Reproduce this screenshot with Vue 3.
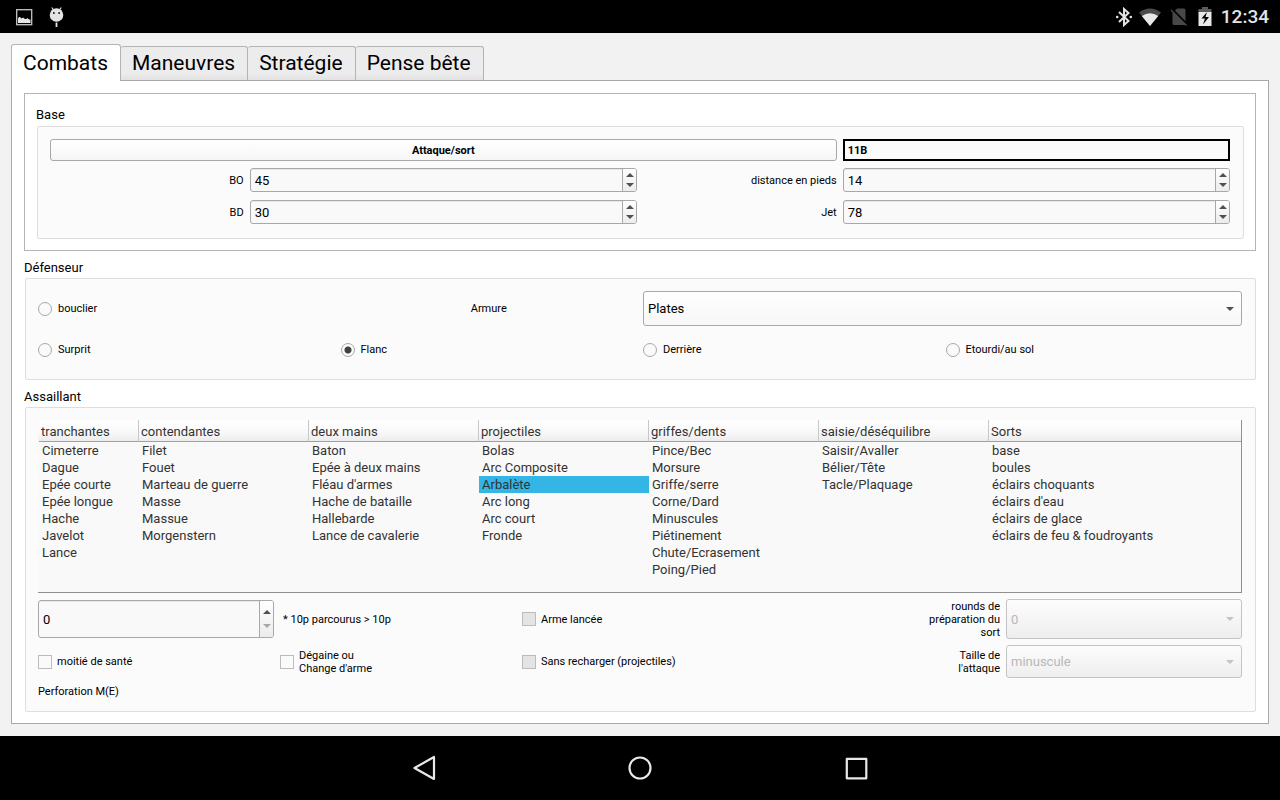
<script setup>
import { ref } from 'vue'

const tabs = ['Combats', 'Maneuvres', 'Stratégie', 'Pense bête']
const activeTab = ref('Combats')

const attack = ref('11B')
const stats = ref([
  { id: 'bo', label: 'BO', value: 45 },
  { id: 'distance', label: 'distance en pieds', value: 14 },
  { id: 'bd', label: 'BD', value: 30 },
  { id: 'jet', label: 'Jet', value: 78 },
])

const armour = ref('Plates')
const positions = ['Surprit', 'Flanc', 'Derrière', 'Etourdi/au sol']
const position = ref('Flanc')
const shield = ref(false)

const weapons = [
  { name: 'tranchantes', items: ['Cimeterre', 'Dague', 'Epée courte', 'Epée longue', 'Hache', 'Javelot', 'Lance'] },
  { name: 'contendantes', items: ['Filet', 'Fouet', 'Marteau de guerre', 'Masse', 'Massue', 'Morgenstern'] },
  { name: 'deux mains', items: ['Baton', 'Epée à deux mains', "Fléau d'armes", 'Hache de bataille', 'Hallebarde', 'Lance de cavalerie'] },
  { name: 'projectiles', items: ['Bolas', 'Arc Composite', 'Arbalète', 'Arc long', 'Arc court', 'Fronde'] },
  { name: 'griffes/dents', items: ['Pince/Bec', 'Morsure', 'Griffe/serre', 'Corne/Dard', 'Minuscules', 'Piétinement', 'Chute/Ecrasement', 'Poing/Pied'] },
  { name: 'saisie/déséquilibre', items: ['Saisir/Avaller', 'Bélier/Tête', 'Tacle/Plaquage'] },
  { name: 'Sorts', items: ['base', 'boules', 'éclairs choquants', "éclairs d'eau", 'éclairs de glace', 'éclairs de feu & foudroyants'] },
]
const rowCount = Math.max(...weapons.map((w) => w.items.length))
const selected = ref('Arbalète')
const travelled = ref(0)

function select(item) {
  if (item) selected.value = item
}
</script>

<template>
  <div class="screen">
    <header class="status">
      <div class="status-left">
        <svg width="18" height="18" viewBox="0 0 18 18">
          <rect x="1.700" y="1.700" width="15" height="15" fill="#000" stroke="#c4c4c4" stroke-width="1.300" />
          <path d="M3 15v-4.500l1-1.500h1l1.500 1.500 1.500-1 2 1.500h1.500l1-1 1.500 1.500h1.500V15z" fill="#e4e4e4" />
        </svg>
        <svg width="18" height="22" viewBox="0 0 18 22">
          <path d="M3.800 1.500l2 3M13.200 1.500l-2 3" stroke="#e4e4e4" stroke-width="1.200" />
          <circle cx="8.500" cy="9" r="6.800" fill="#e4e4e4" />
          <path d="M5 7h1.700M10.300 7h1.700" stroke="#000" stroke-width="1.500" />
          <path d="M8.500 16.500v4.500" stroke="#e4e4e4" stroke-width="1.800" />
        </svg>
      </div>
      <div class="status-right">
        <svg width="18" height="20" viewBox="0 0 18 20">
          <path d="M4 5l9.500 9L9 18V2l4.500 4L4 15" fill="none" stroke="#e4e4e4" stroke-width="2" />
          <circle cx="2.200" cy="10" r="1.300" fill="#e4e4e4" />
          <circle cx="15.800" cy="10" r="1.300" fill="#e4e4e4" />
        </svg>
        <svg width="24" height="20" viewBox="0 0 24 20">
          <path d="M1 5.500Q12-2.500 23 5.500L12 19z" fill="#4c4c4c" />
          <path d="M3.800 8.900Q12 3.500 20.200 8.900L12 19z" fill="#e8e8e8" />
        </svg>
        <svg width="18" height="20" viewBox="0 0 18 20">
          <path d="M6 1.500h7q1.500 0 1.500 1.500v15H3Q1.500 18 1.500 16.500V6.500z" fill="#484848" />
          <path d="M.5 1.800l16 16" stroke="#000" stroke-width="2.500" />
          <path d="M-.5 2.500l16 16" stroke="#484848" stroke-width="1.400" />
        </svg>
        <svg width="14" height="20" viewBox="0 0 14 20">
          <path d="M4 0h6v2h3.500v4H.5V2H4z" fill="#5c5c5c" />
          <path d="M.5 5h13v14H.5z" fill="#e8e8e8" />
          <path d="M9 5L3.500 11.500H7L5 17.500 11 10H7.500z" fill="#000" />
        </svg>
        <time class="clock">12:34</time>
      </div>
    </header>

    <main class="window">
      <div class="tabs" role="tablist">
        <button
          v-for="tab in tabs"
          :key="tab"
          type="button"
          role="tab"
          class="tab"
          :class="{ active: tab === activeTab }"
          :aria-selected="tab === activeTab"
          @click="activeTab = tab"
        >{{ tab }}</button>
      </div>

      <div class="pane">
        <section class="frame">
          <h2 class="title">Base</h2>
          <div class="group base">
            <button type="button" class="attack">Attaque/sort</button>
            <input v-model="attack" class="code" type="text" aria-label="Attaque/sort" />
            <template v-for="stat in stats" :key="stat.id">
              <label class="small right" :for="stat.id">{{ stat.label }}</label>
              <div class="spin">
                <input :id="stat.id" v-model.number="stat.value" type="number" />
                <div class="steps">
                  <button type="button" class="step up" aria-label="+" @click="stat.value++"></button>
                  <button type="button" class="step down" aria-label="-" @click="stat.value--"></button>
                </div>
              </div>
            </template>
          </div>
        </section>

        <section>
          <h2 class="title">Défenseur</h2>
          <div class="group defender">
            <label class="choice small"><input v-model="shield" type="radio" name="shield" :value="true" />bouclier</label>
            <label class="small center" for="armour">Armure</label>
            <div class="combo wide">
              <select id="armour" v-model="armour"><option>Plates</option></select>
            </div>
            <label v-for="p in positions" :key="p" class="choice small">
              <input v-model="position" type="radio" name="position" :value="p" />{{ p }}
            </label>
          </div>
        </section>

        <section>
          <h2 class="title">Assaillant</h2>
          <div class="group">
            <div class="weapons">
              <table>
                <colgroup>
                  <col class="first" />
                  <col v-for="n in 5" :key="n" class="middle" />
                  <col />
                </colgroup>
                <thead>
                  <tr><th v-for="w in weapons" :key="w.name" scope="col">{{ w.name }}</th></tr>
                </thead>
                <tbody>
                  <tr v-for="r in rowCount" :key="r">
                    <td
                      v-for="w in weapons"
                      :key="w.name"
                      :class="{ selected: w.items[r - 1] === selected }"
                      @click="select(w.items[r - 1])"
                    >{{ w.items[r - 1] }}</td>
                  </tr>
                </tbody>
              </table>
            </div>

            <div class="options">
              <div class="spin tall">
                <input id="travelled" v-model.number="travelled" type="number" min="0" />
                <div class="steps">
                  <button type="button" class="step up" aria-label="+" @click="travelled++"></button>
                  <button type="button" class="step down" aria-label="-" :disabled="travelled === 0" @click="travelled--"></button>
                </div>
              </div>
              <label class="small note" for="travelled">* 10p parcourus &gt; 10p</label>
              <label class="check small"><input type="checkbox" disabled />Arme lancée</label>
              <label class="small right narrow" for="rounds">rounds de préparation du sort</label>
              <div class="combo high">
                <select id="rounds" disabled><option>0</option></select>
              </div>

              <label class="check small"><input type="checkbox" />moitié de santé</label>
              <label class="check small"><input type="checkbox" /><span>Dégaine ou<br />Change d'arme</span></label>
              <label class="check small"><input type="checkbox" disabled />Sans recharger (projectiles)</label>
              <label class="small right narrow" for="size">Taille de l'attaque</label>
              <div class="combo">
                <select id="size" disabled><option>minuscule</option></select>
              </div>

              <p class="small result">Perforation M(E)</p>
            </div>
          </div>
        </section>
      </div>
    </main>

    <nav class="navbar">
      <button type="button" aria-label="Retour">
        <svg width="32" height="32" viewBox="0 0 32 32"><path d="M6.500 16L26 5v22z" fill="none" stroke="#e8e8e8" stroke-width="2.200" stroke-linejoin="round" /></svg>
      </button>
      <button type="button" aria-label="Accueil">
        <svg width="32" height="32" viewBox="0 0 32 32"><circle cx="16" cy="16" r="10.500" fill="none" stroke="#e8e8e8" stroke-width="2.200" /></svg>
      </button>
      <button type="button" aria-label="Récents">
        <svg width="32" height="32" viewBox="0 0 32 32"><rect x="6.800" y="6.800" width="19.500" height="19.500" fill="none" stroke="#e8e8e8" stroke-width="2.200" stroke-linejoin="round" /></svg>
      </button>
    </nav>
  </div>
</template>

<style>
body {
  margin: 0;
  background: #f2f2f2;
}
</style>

<style scoped>
* {
  box-sizing: border-box;
}
.screen {
  min-height: 100vh;
  display: flex;
  flex-direction: column;
  font-family: Roboto, "Liberation Sans", sans-serif;
  font-size: 13px;
  color: #000;
}
button,
input,
select {
  font: inherit;
  color: inherit;
  margin: 0;
  padding: 0;
  border: 0;
  border-radius: 0;
  background: none;
  outline: none;
}
svg {
  display: block;
}

.status {
  height: 33px;
  padding: 0 11px 0 15px;
  display: flex;
  align-items: center;
  justify-content: space-between;
  background: #000;
}
.status-left {
  display: flex;
  align-items: center;
  gap: 15px;
}
.status-right {
  display: flex;
  align-items: center;
  gap: 9px;
}
.status-right svg:first-child {
  margin-right: -4px;
}
.clock {
  font-size: 19px;
  font-weight: 500;
  line-height: 24px;
  color: #e4e4e4;
}

.window {
  flex: 1;
  display: flex;
  flex-direction: column;
  padding: 11px 11px 12px;
  background: #f2f2f2;
}
.tabs {
  display: flex;
  align-items: flex-end;
  padding-right: 11px;
}
.tab {
  height: 34px;
  padding: 0 12px 0 11px;
  border: 1px solid #b4b4b4;
  border-width: 1px 1px 0 0;
  border-radius: 3px 3px 0 0;
  font-size: 21px;
  line-height: 33px;
  background: linear-gradient(#ececec 80%, #e2e2e2);
}
.tab.active {
  position: relative;
  height: 37px;
  margin-bottom: -1px;
  border-width: 1px 1px 0;
  line-height: 36px;
  background: #fff;
}
.pane {
  flex: 1;
  padding: 12px 12px 11px;
  border: 1px solid #a8a8a8;
  background: #fff;
}

.title {
  margin: 0;
  padding: 9px 0 2px;
  font-size: 13px;
  font-weight: 400;
  line-height: 16px;
}
.frame {
  padding: 4px 11px 11px;
  border: 1px solid #b4b4b4;
}
.frame .title {
  padding-bottom: 3px;
}
.group {
  margin-left: 1px;
  padding: 12px 13px 12px 12px;
  border: 1px solid #dedede;
  border-radius: 2px;
  background: #fbfbfb;
}
.small {
  margin: 0;
  font-size: 11px;
  line-height: 13px;
}
.right {
  text-align: right;
}
.center {
  text-align: center;
}

.base {
  display: grid;
  grid-template-columns: 1fr 2fr 1fr 2fr;
  grid-template-rows: 22px 25px 25px;
  align-items: center;
  column-gap: 6px;
  row-gap: 7px;
  padding-bottom: 13px;
}
.base .spin {
  align-self: start;
}
.attack {
  grid-column: 1 / 4;
  height: 22px;
  border: 1px solid #a8a8a8;
  border-radius: 3px;
  font-size: 11px;
  font-weight: 700;
  background: linear-gradient(#fff, #f6f6f6);
}
.code {
  height: 22px;
  width: 100%;
  min-width: 0;
  padding: 0 3px;
  border: 2px solid #000;
  font-size: 11px;
  font-weight: 700;
}

.spin {
  display: flex;
  height: 24px;
  border: 1px solid #a8a8a8;
  border-radius: 3px;
  overflow: hidden;
  background: #f9f9f9;
  box-shadow: inset 0 1px 0 #e8e8e8;
}
.spin.tall {
  height: 38px;
}
.spin input {
  flex: 1;
  min-width: 0;
  padding: 0 4px;
  appearance: textfield;
}
.spin input::-webkit-inner-spin-button {
  appearance: none;
}
.steps {
  width: 14px;
  display: flex;
  flex-direction: column;
  align-items: center;
  justify-content: space-evenly;
  border-left: 1px solid #a8a8a8;
  background: linear-gradient(#fff, #ececec);
}
.step {
  width: 12px;
  height: 8px;
  display: grid;
  place-items: center;
}
.step::before {
  content: "";
  border: 4px solid transparent;
}
.up::before {
  border-top-width: 0;
  border-bottom-color: #505050;
}
.down::before {
  border-bottom-width: 0;
  border-top-color: #505050;
}
.down:disabled::before {
  border-top-color: #a8a8a8;
}

.defender {
  display: grid;
  grid-template-columns: repeat(4, 1fr);
  grid-auto-rows: 35px;
  align-items: center;
  gap: 6px;
}
.wide {
  grid-column: 3 / 5;
}
.choice,
.check {
  display: flex;
  align-items: center;
}
.choice {
  gap: 6px;
}
.check {
  gap: 5px;
}
.choice input,
.check input {
  flex: none;
  width: 14px;
  height: 14px;
  appearance: none;
  border: 1px solid #a8a8a8;
  background: #fafafa;
}
.choice input {
  border-radius: 50%;
}
.choice input:checked {
  background: radial-gradient(circle, #404040 3px, #fafafa 4px);
}
.check input {
  border-color: #bcbcbc;
}
.check input:disabled {
  background: #e4e4e4;
}
.note {
  padding-left: 3px;
}
.narrow {
  justify-self: end;
  max-width: 72px;
}
.result {
  padding: 1px 0;
}

.combo {
  position: relative;
  height: 33px;
}
.combo.wide {
  height: 35px;
}
.combo.high {
  height: 40px;
}
.combo select {
  width: 100%;
  height: 100%;
  padding: 0 4px;
  appearance: none;
  border: 1px solid #a8a8a8;
  border-radius: 3px;
  background: linear-gradient(#fff, #f7f7f7);
}
.combo select:disabled {
  opacity: 1;
  color: #b8b8b8;
  border-color: #c4c4c4;
  background: linear-gradient(#fdfdfd, #eeeeee);
}
.combo::after {
  content: "";
  position: absolute;
  top: 50%;
  right: 8px;
  margin-top: -2px;
  border: 4px solid transparent;
  border-bottom-width: 0;
  border-top-color: #505050;
  pointer-events: none;
}
.combo:has(select:disabled)::after {
  border-top-color: #c4c4c4;
}

.weapons {
  margin-bottom: 6px;
  padding: 0 0 14px 1px;
  border: 1px solid #909090;
  border-width: 0 1px 1px 0;
  background: #f9f9f9;
}
table {
  width: 100%;
  table-layout: fixed;
  border-collapse: separate;
  border-spacing: 0;
  color: #333;
}
.first {
  width: 100px;
}
.middle {
  width: 170px;
}
th {
  height: 22px;
  padding: 2px 2px 0;
  border-right: 1px solid #c8c8c8;
  border-bottom: 1px solid #a0a0a0;
  font-weight: 400;
  line-height: 17px;
  text-align: left;
  white-space: nowrap;
  background: linear-gradient(#fff, #f8f8f8 60%, #ececec);
}
th:last-child {
  border-right: 0;
}
td {
  height: 17px;
  padding: 0 3px;
  line-height: 17px;
  white-space: nowrap;
}
.selected {
  background: #33b5e5;
}

.options {
  display: grid;
  grid-template-columns: repeat(5, minmax(0, 1fr));
  align-items: center;
  gap: 6px;
}
.options .small {
  white-space: nowrap;
}
.options .narrow {
  white-space: normal;
}

.navbar {
  height: 64px;
  display: flex;
  align-items: center;
  justify-content: center;
  gap: 184px;
  background: #000;
}
</style>
